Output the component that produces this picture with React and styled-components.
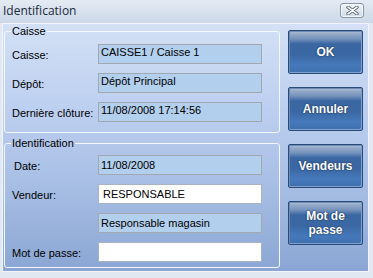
import React from "react";
import styled, { createGlobalStyle } from "styled-components";

const Global = createGlobalStyle`
  html, body { margin: 0; padding: 0; background: #e1e8f1; }
  * { box-sizing: border-box; }
`;

const Window = styled.div`
  width: 373px;
  height: 278px;
  display: flex;
  flex-direction: column;
  background: #e1e8f1;
  font-family: "Liberation Sans", Arial, sans-serif;
  font-size: 11px;
  color: #000;
  overflow: hidden;
`;

const TitleBar = styled.div`
  height: 23px;
  flex: none;
  display: flex;
  align-items: center;
  justify-content: space-between;
  padding: 0 9px 0 3px;
  background: linear-gradient(to bottom, #e4ebf4 0%, #d6e0ec 55%, #ccd8e8 100%);
`;

const Title = styled.span`
  font-family: "Open Sans", "Liberation Sans", sans-serif;
  font-size: 12px;
  color: #1b2a3c;
  line-height: 16px;
  margin-top: -1px;
`;

const CloseButton = styled.div`
  width: 24px;
  height: 15px;
  margin-top: -3px;
  border: 1px solid #8595aa;
  border-radius: 3px;
  background: linear-gradient(to bottom, #f4f7fb 0%, #e0e7f0 50%, #d2dbe7 100%);
  box-shadow: inset 0 0 0 1px rgba(255, 255, 255, 0.7);
  display: flex;
  align-items: center;
  justify-content: center;
`;

const Content = styled.div`
  flex: none;
  height: 249px;
  margin: 0 4px 0 2px;
  border: 1px solid #f1f5fa;
  background: linear-gradient(to bottom, #d3e0f5 0%, #bccff0 35%, #a4bbe2 70%, #8ba6d4 100%);
  display: flex;
  gap: 8px;
  padding: 1px 0 0 1px;
`;

const LeftColumn = styled.div`
  width: 276px;
  display: flex;
  flex-direction: column;
  gap: 4px;
`;

const GroupBox = styled.fieldset`
  margin: 0;
  width: 276px;
  border: 1px solid #f4f7fc;
  border-radius: 3px;
  padding: ${(p) => p.$pad};
  display: grid;
  grid-template-columns: 86px 164px;
  grid-auto-rows: 20px;
  row-gap: 9px;
  min-width: 0;
`;

const Legend = styled.legend`
  padding: 0 1px;
  margin-left: -1px;
  font-size: 11px;
  line-height: 13px;
  color: #000;
`;

const Label = styled.div`
  display: flex;
  align-items: center;
  padding-top: 2px;
  padding-left: ${(p) => (p.$indent ? "2px" : "0")};
  white-space: nowrap;
`;

const Field = styled.div`
  height: 20px;
  border: 1px solid ${(p) => (p.$editable ? "#a9b4c2" : "#a2a8b0")};
  background: ${(p) => (p.$editable ? "#ffffff" : "#b3cfee")};
  display: flex;
  align-items: ${(p) => (p.$top ? "flex-start" : "center")};
  padding: ${(p) => (p.$top ? "1px 2px 0 2px" : "0 2px")};
  padding-left: ${(p) => (p.$editable ? "4px" : "2px")};
  line-height: 13px;
  white-space: nowrap;
  overflow: hidden;
`;

const ButtonColumn = styled.div`
  width: 75px;
  display: flex;
  flex-direction: column;
  gap: 13px;
  padding-top: 5px;
`;

const ActionButton = styled.div`
  width: 75px;
  height: 44px;
  border: 1px solid #2a4a78;
  border-radius: 2px;
  background: linear-gradient(
    to bottom,
    #b3c2d8 0px,
    #94a9c7 3px,
    #7592bb 8px,
    #4f77ad 11px,
    #3a66a1 13px,
    #3b68a4 24px,
    #4679bb 34px,
    #3f6fac 42px
  );
  box-shadow: inset -2px -2px 0 -1px #7da0d0, inset 1px 1px 0 #6c8ab4;
  display: flex;
  align-items: center;
  justify-content: center;
  text-align: center;
  color: #ffffff;
  font-family: "Liberation Sans", Arial, sans-serif;
  font-weight: bold;
  font-size: 12px;
  line-height: 14px;
  text-shadow: 0 0 2px #1d3a66, 0 0 1px #1d3a66;
  padding-bottom: 1px;
`;

export default function App() {
  return (
    <>
      <Global />
      <Window>
        <TitleBar>
          <Title>Identification</Title>
          <CloseButton>
            <svg width="13" height="9" viewBox="0 0 13 9">
              <path d="M2 1.2 L11 7.8 M11 1.2 L2 7.8" stroke="#5b6878" strokeWidth="3.4" strokeLinecap="round" />
              <path d="M2 1.2 L11 7.8 M11 1.2 L2 7.8" stroke="#ffffff" strokeWidth="1.6" strokeLinecap="round" />
            </svg>
          </CloseButton>
        </TitleBar>
        <Content>
          <LeftColumn>
            <GroupBox $pad="6px 0 10px 7px">
              <Legend>Caisse</Legend>
              <Label>Caisse:</Label>
              <Field $top>CAISSE1 / Caisse 1</Field>
              <Label>Dépôt:</Label>
              <Field $top>Dépôt Principal</Field>
              <Label>Dernière clôture:</Label>
              <Field $top>11/08/2008 17:14:56</Field>
            </GroupBox>
            <GroupBox $pad="5px 0 5px 7px">
              <Legend>Identification</Legend>
              <Label $indent>Date:</Label>
              <Field>11/08/2008</Field>
              <Label>Vendeur:</Label>
              <Field $editable>RESPONSABLE</Field>
              <Label />
              <Field>Responsable magasin</Field>
              <Label>Mot de passe:</Label>
              <Field $editable />
            </GroupBox>
          </LeftColumn>
          <ButtonColumn>
            <ActionButton>OK</ActionButton>
            <ActionButton>Annuler</ActionButton>
            <ActionButton>Vendeurs</ActionButton>
            <ActionButton>
              Mot de
              <br />
              passe
            </ActionButton>
          </ButtonColumn>
        </Content>
      </Window>
    </>
  );
}
